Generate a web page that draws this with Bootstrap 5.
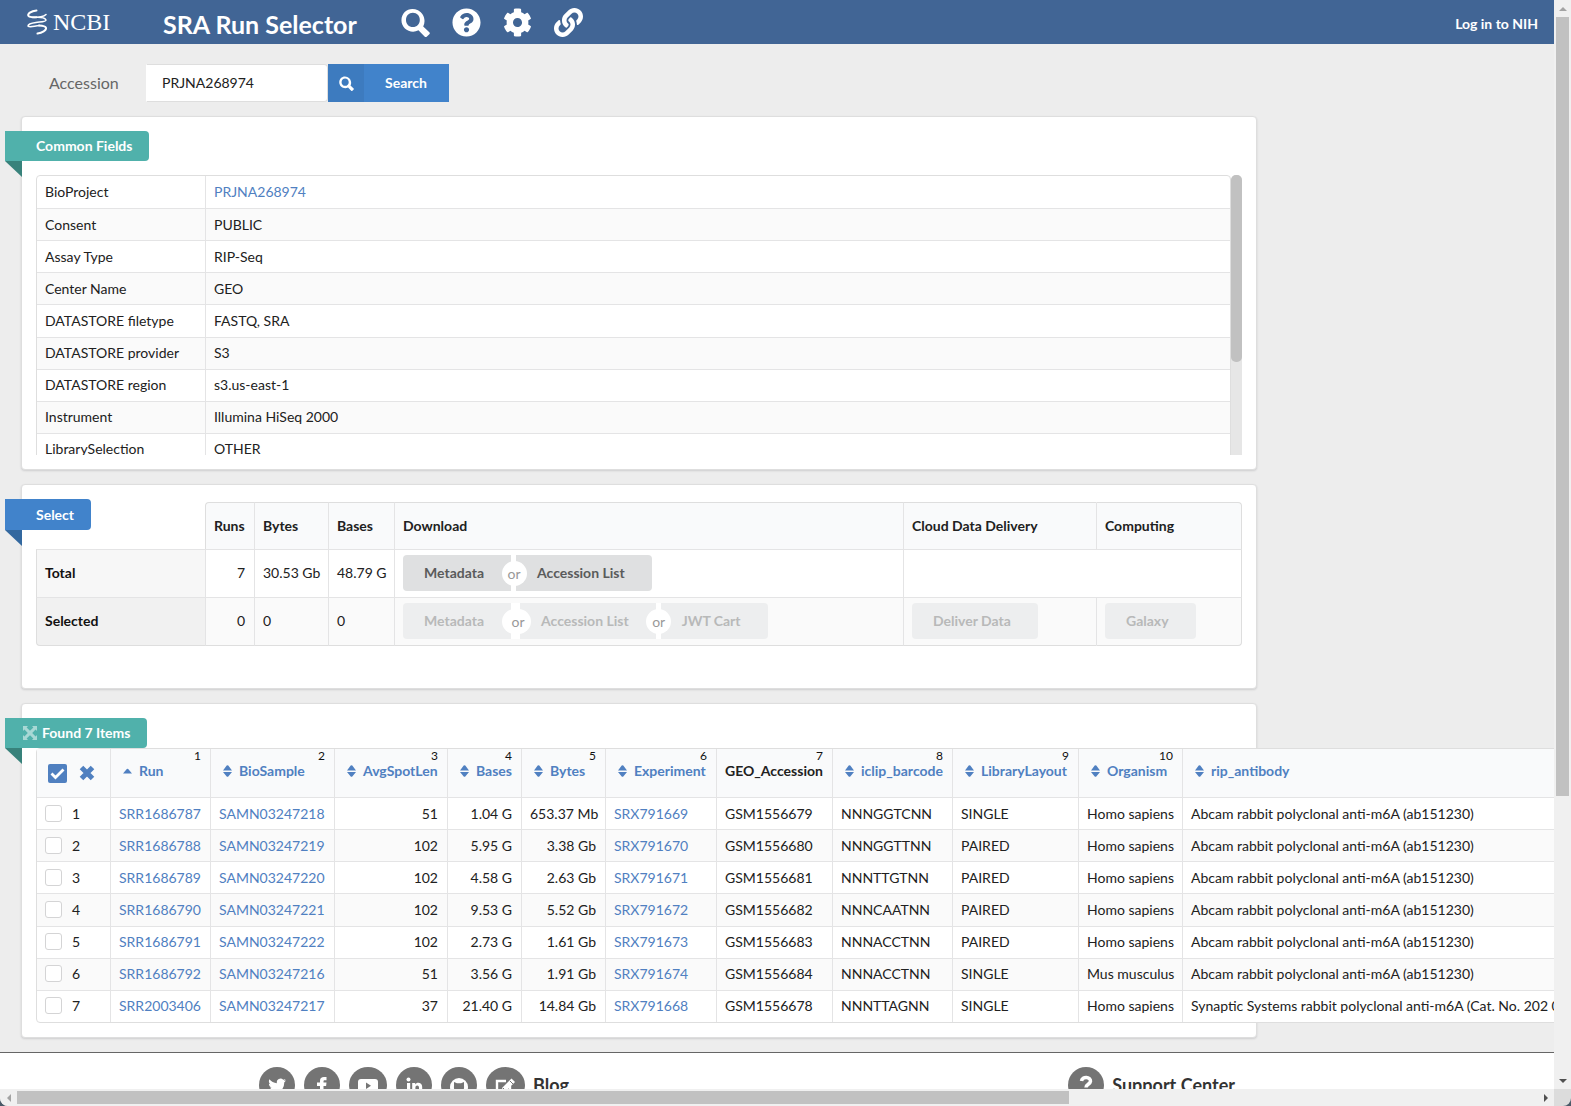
<!DOCTYPE html>
<html lang="en">
<head>
<meta charset="utf-8">
<meta name="viewport" content="width=device-width, initial-scale=1">
<title>SRA Run Selector</title>
<link rel="stylesheet" href="https://cdn.jsdelivr.net/npm/bootstrap@5.3.0/dist/css/bootstrap.min.css">
<style>
:root{--line:#dedede;--line-in:#e4e4e5;--link:#5080c1;--blue:#4183cb;--teal:#50b1ab}
body{font-family:Lato,"Liberation Sans",sans-serif;font-size:14px;line-height:20px;color:#212121;background:#4a5a68}
a{color:var(--link);text-decoration:none}
svg{display:block;flex:none}
.shell{display:grid;grid-template:minmax(0,1fr) 17px / minmax(0,1fr) 17px;height:100vh;overflow:hidden;border-radius:0 0 8px 8px;background:#dcdcdc}
.pane{overflow:hidden;background:#ededed}
.bar-v,.bar-h{background:#f0f0f0;display:flex;align-items:center}
.bar-v{flex-direction:column}
.arrow{flex:none;width:17px;height:17px;display:flex;align-items:center;justify-content:center}
.thumb-v{width:13px;height:71.5%;background:#c1c1c1}
.thumb-h{height:13px;width:67.7%;background:#c1c1c1}
.topbar{height:44px;background:#416595;color:#fff;padding:0 16px 0 27px}
.topbar a{color:#fff}
.brand{font-family:"Liberation Serif",serif;font-size:24px;line-height:28px;gap:6px;width:136px}
.app-title{font-size:25px;line-height:30px;font-weight:700;margin:4px 44px 0 0}
.tools{gap:22px}
.tools a{width:29px}
.searchrow{padding:20px 0 14px 49px}
.searchrow label{font-size:16px;color:#666;width:97px}
.acc-input{width:182px;height:38px;border:1px solid #dedede;border-left-color:#fff;border-radius:0 4px 4px 0;padding:0 15px 2px;color:#212121;font-size:14px}
.btn-go{height:38px;border:0;border-radius:0;background:var(--blue);color:#fff;font-weight:700;font-size:14px;padding:0 22px 0 0;display:flex;align-items:center;gap:21px}
.btn-go span{height:38px;width:36px;background:#3d7bbf;display:flex;align-items:center;justify-content:center}
.panel{margin:0 297px 14px 21px;background:#fff;border:1px solid var(--line);border-radius:4px;box-shadow:0 1px 2px rgba(34,36,38,.15);padding:14px;position:relative}
.ribbon{position:relative;display:flex;align-items:center;gap:5px;width:max-content;height:30px;margin-left:-31px;padding:0 17px 0 31px;border-radius:0 4px 4px 0;color:#fff;font-weight:700;font-size:14px;background:var(--teal)}
.ribbon::after{content:"";position:absolute;left:0;top:100%;border-style:solid;border-width:0 17px 16px 0;border-color:transparent #38827b transparent transparent}
.ribbon-blue{background:var(--blue);height:31px}
.ribbon-blue::after{border-right-color:#33689f}
.ribbon-found{padding-left:18px}
.grid{border-collapse:separate;border-spacing:0;table-layout:fixed;border:1px solid var(--line);border-radius:4px;background:#fff;margin:0}
.grid td,.grid th{padding:0 9px 0 8px;border-left:1px solid var(--line-in);border-top:1px solid var(--line-in);white-space:nowrap;height:31px;font-weight:400;text-align:left}
.grid td:first-child,.grid th:first-child{border-left:0}
.grid tr:first-child>*{border-top:0}
.grid tbody tr:nth-child(even){background:#fafafa}
.grid .num{text-align:right}
.fieldscroll{height:280px;overflow:hidden;margin-top:14px}
.fieldscroll .grid{height:291px}
.track{width:11px;background:#e6e6e6;flex:none;border-radius:5px 5px 0 0}
.track div{height:187px;background:#c1c1c1;border-radius:5px}
.sel{border:0;background:none;margin:3px 0 28px}
.sel th,.sel td{height:48px!important;border-left:1px solid var(--line-in)}
.sel thead th{height:47px!important;background:#f9fafb;font-weight:700;border-top:1px solid var(--line)!important}
.sel thead th:first-child{background:none;border-top-color:transparent!important}
.sel thead th:nth-child(2){border-top-left-radius:4px;border-left-color:var(--line)}
.sel thead th:last-child{border-top-right-radius:4px;border-right:1px solid var(--line)}
.sel tbody tr>*{border-top:1px solid var(--line-in)!important;padding-bottom:1px}
.sel tbody tr>*:last-child{border-right:1px solid var(--line)}
.sel tbody tr:last-child>*{border-bottom:1px solid var(--line);height:49px!important}
.sel tbody th{font-weight:700!important;background:#f7f7f7;border-left:1px solid var(--line)!important;color:#111}
.sel tbody tr:last-child th{background:#f1f1f1;border-bottom-left-radius:4px}
.sel tbody tr:last-child td:last-child{border-bottom-right-radius:4px}
.act{height:36px;border:0;background:#dfe0e1;color:#5a5b5b;font-weight:700;font-size:14px;line-height:20px;padding:0 27px 0 21px;border-radius:4px}
.act:disabled{background:#edeeef;color:#b8b9b9;opacity:1}
.act-l{border-radius:4px 0 0 4px}.act-m{border-radius:0}.act-r{border-radius:0 4px 4px 0}
.or{position:relative;width:5px;height:36px;color:#999;background:#fff}
.or span{position:absolute;z-index:1;left:50%;top:50%;width:25px;height:25px;line-height:26px;margin:-12px 0 0 -12px;border-radius:13px;background:#fff;text-align:center;font-weight:400}
.or-wide{width:9px}.or-wide span{width:29px;margin-left:-14px;padding-left:4px}
.runs{width:1656px;height:275px}
.runs thead th{background:#f9fafb;height:48px;padding:1px 9px 0 8px;font-weight:700;line-height:18px;vertical-align:top}
.runs thead small{display:block;font-size:12px;line-height:12px;height:12px;font-weight:400;text-align:right;color:#111}
.runs thead a{display:flex;align-items:center;gap:7px;padding-left:4px}
.runs thead th.pick{padding:0 11px;vertical-align:middle}
.runs tbody tr:first-child>*{border-top:1px solid var(--line-in)}
.icon-btn{border:0;background:none;padding:0;color:#5080c0}
.runs .form-check-input{width:17px;height:17px;margin:0 10px 0 0;border:1px solid #d4d4d5;border-radius:3px;vertical-align:-3px}
.foot{background:#fff;border-top:1px solid #666;margin-top:14px;padding:14px 319px 40px 259px;color:#333;font-size:18px;line-height:36px;font-weight:700}
.foot a{color:#333}
.social{gap:9px}
</style>
<script src="https://cdn.jsdelivr.net/npm/bootstrap@5.3.0/dist/js/bootstrap.bundle.min.js"></script>
</head>
<body>
<svg width="0" height="0" class="position-absolute" aria-hidden="true">
<symbol id="i-search" viewBox="0 0 512 512"><path fill="currentColor" d="M500 428 392 325C445 225 405 95 300 40 160-30 8 60 8 215c0 150 160 250 300 180l108 106c12 12 30 12 42 0l42-38c12-10 12-25 0-35zM210 335c-70.700 0-122-54-122-125 0-70.700 52-125 122-125 70.700 0 122 54 122 125 0 70.700-52 125-122 125z"/></symbol>
<symbol id="i-help" viewBox="0 0 512 512"><path fill="currentColor" d="M504 256c0 137-111 248-248 248S8 393 8 256C8 119.100 119 8 256 8s248 111.100 248 248zM262.700 90c-54.500 0-89.300 23-116.500 63.800-3.500 5.300-2.400 12.400 2.700 16.300l34.700 26.300c5.200 3.900 12.600 3 16.700-2.100 17.900-22.700 30.100-35.800 57.300-35.800 20.400 0 45.700 13.100 45.700 33 0 15-12.400 22.700-32.500 34C247.100 238.500 216 254.900 216 296v4c0 6.600 5.400 12 12 12h56c6.600 0 12-5.400 12-12v-1.300c0-28.500 83.200-29.600 83.200-106.700 0-58-60.200-102-116.500-102zM256 338c-25.400 0-46 20.600-46 46s20.600 46 46 46 46-20.600 46-46-20.600-46-46-46z"/></symbol>
<symbol id="i-cog" viewBox="0 0 512 512"><path fill="currentColor" d="M487.400 315.700l-42.600-24.600c4.300-23.200 4.300-47 0-70.200l42.600-24.600c4.900-2.800 7.100-8.600 5.500-14-11.100-35.600-30-67.800-54.700-94.600-3.800-4.100-10-5.100-14.800-2.300L380.800 110c-17.900-15.400-38.500-27.300-60.800-35.100V25.800c0-5.600-3.900-10.500-9.400-11.700-36.700-8.200-74.300-7.800-109.200 0-5.500 1.200-9.400 6.100-9.400 11.700V75c-22.200 7.900-42.800 19.800-60.800 35.100L88.700 85.500c-4.900-2.800-11-1.900-14.800 2.300-24.700 26.700-43.600 58.900-54.700 94.600-1.700 5.400.6 11.200 5.500 14L67.300 221c-4.300 23.200-4.300 47 0 70.200l-42.600 24.600c-4.900 2.800-7.100 8.600-5.500 14 11.100 35.600 30 67.800 54.700 94.600 3.800 4.100 10 5.100 14.800 2.300l42.600-24.600c17.900 15.400 38.500 27.300 60.800 35.100v49.200c0 5.600 3.900 10.500 9.400 11.700 36.700 8.200 74.300 7.800 109.200 0 5.500-1.200 9.400-6.100 9.400-11.700v-49.200c22.200-7.900 42.800-19.800 60.800-35.100l42.600 24.600c4.900 2.800 11 1.900 14.800-2.300 24.700-26.700 43.600-58.900 54.700-94.600 1.500-5.500-.7-11.300-5.600-14.100zM256 336c-44.100 0-80-35.900-80-80s35.900-80 80-80 80 35.900 80 80-35.900 80-80 80z"/></symbol>
<symbol id="i-link" viewBox="0 0 512 512"><path fill="currentColor" d="M326.600 185.400c59.700 59.800 58.900 155.700.4 214.600-.1.100-.2.300-.4.400l-67.200 67.200c-59.300 59.300-155.700 59.300-215 0-59.300-59.300-59.300-155.700 0-215l37.100-37.100c9.800-9.800 26.800-3.300 27.300 10.600.6 17.700 3.800 35.500 9.700 52.700 2 5.800.6 12.300-3.800 16.600l-13.100 13.100c-28 28-28.900 73.700-1.200 102 28 28.600 74.100 28.700 102.300.5l67.200-67.200c28.200-28.200 28.100-73.800 0-101.800-3.700-3.700-7.400-6.600-10.300-8.600a16 16 0 0 1-6.900-12.600c-.4-10.600 3.300-21.500 11.700-29.800l21.100-21.100c5.500-5.500 14.200-6.200 20.600-1.700a152.500 152.500 0 0 1 20.500 17.200zM467.500 44.400c-59.300-59.300-155.700-59.300-215 0l-67.200 67.200c-.1.100-.3.300-.4.400-58.600 58.900-59.400 154.800.4 214.600a152.500 152.500 0 0 0 20.500 17.200c6.400 4.500 15.100 3.800 20.600-1.700l21.100-21.100c8.400-8.400 12.100-19.200 11.700-29.800a16 16 0 0 0-6.900-12.600c-2.900-2-6.600-4.900-10.300-8.600-28.100-28.100-28.200-73.600 0-101.800l67.200-67.200c28.200-28.200 74.300-28.100 102.300.5 27.800 28.300 26.900 73.900-1.200 102l-13.100 13.100c-4.400 4.400-5.800 10.800-3.800 16.600 5.900 17.200 9 35 9.700 52.700.5 13.900 17.500 20.400 27.300 10.600l37.100-37.100c59.300-59.300 59.300-155.700 0-215z"/></symbol>
<symbol id="i-sort" viewBox="0 0 9 12"><path fill="currentColor" d="M0 5.500 3.700.6Q4.500-.2 5.300.6L9 5.500ZM0 7 3.700 11.400Q4.500 12.200 5.300 11.400L9 7Z"/></symbol>
<symbol id="i-up" viewBox="0 0 9 12"><path fill="currentColor" d="M0 8.500 3.800 4Q4.500 3.400 5.200 4L9 8.500Z"/></symbol>
</svg>

<div class="shell">
<div class="pane">
<header class="topbar d-flex align-items-center">
<a href="#" class="brand d-flex align-items-center">
<svg width="20" height="26" viewBox="0 0 20 26" fill="none" stroke="#fff" stroke-linecap="round"><path stroke-width="2" d="M9.500 1.500C4 2 0 5 1.500 7c1.200 1.600 5 1.200 8 1.200M12 16.500c4 .2 6.500.8 7 2.300.6 2.500-4 5-8.500 5.700"/><path stroke-width="1.500" d="M9 8.200c5-.2 9 .6 10 2.800 0 2-5 1.800-10 2.400-5 .6-8 2.200-8 3.600 1.500 2 6 0 11.500-.5M5 8.500c6 0 11 0 14-3"/></svg>
<span>NCBI</span></a>
<h1 class="app-title">SRA Run Selector</h1>
<nav class="tools d-flex">
<a href="#" aria-label="Search"><svg width="29" height="29"><use href="#i-search"/></svg></a>
<a href="#" aria-label="Help"><svg width="29" height="29"><use href="#i-help"/></svg></a>
<a href="#" aria-label="Settings"><svg width="29" height="29"><use href="#i-cog"/></svg></a>
<a href="#" aria-label="Permalink"><svg width="29" height="29"><use href="#i-link"/></svg></a>
</nav>
<a href="#" class="ms-auto fw-bold mt-1">Log in to NIH</a>
</header>

<form class="searchrow d-flex align-items-center">
<label for="acc">Accession</label>
<input id="acc" class="acc-input" type="text" value="PRJNA268974">
<button type="button" class="btn-go"><span><svg width="15" height="15"><use href="#i-search"/></svg></span>Search</button>
</form>

<section class="panel">
<div class="ribbon">Common Fields</div>
<div class="fieldscroll d-flex align-items-start">
<table class="grid flex-fill">
<colgroup><col style="width:168px"><col></colgroup>
<tbody>
<tr><td>BioProject</td><td><a href="#">PRJNA268974</a></td></tr>
<tr><td>Consent</td><td>PUBLIC</td></tr>
<tr><td>Assay Type</td><td>RIP-Seq</td></tr>
<tr><td>Center Name</td><td>GEO</td></tr>
<tr><td>DATASTORE filetype</td><td>FASTQ, SRA</td></tr>
<tr><td>DATASTORE provider</td><td>S3</td></tr>
<tr><td>DATASTORE region</td><td>s3.us-east-1</td></tr>
<tr><td>Instrument</td><td>Illumina HiSeq 2000</td></tr>
<tr><td>LibrarySelection</td><td>OTHER</td></tr>
</tbody></table>
<div class="track align-self-stretch"><div></div></div>
</div>
</section>

<section class="panel">
<div class="ribbon ribbon-blue position-absolute">Select</div>
<table class="grid sel w-100">
<colgroup><col style="width:169px"><col style="width:49px"><col style="width:74px"><col style="width:66px"><col><col style="width:193px"><col style="width:146px"></colgroup>
<thead><tr><th></th><th>Runs</th><th>Bytes</th><th>Bases</th><th>Download</th><th>Cloud Data Delivery</th><th>Computing</th></tr></thead>
<tbody>
<tr><th>Total</th><td class="num">7</td><td>30.53 Gb</td><td>48.79 G</td>
<td><div class="d-flex"><button class="act act-l">Metadata</button><div class="or"><span>or</span></div><button class="act act-r">Accession List</button></div></td><td colspan="2"></td></tr>
<tr><th>Selected</th><td class="num">0</td><td>0</td><td>0</td>
<td><div class="d-flex"><button class="act act-l" disabled>Metadata</button><div class="or or-wide"><span>or</span></div><button class="act act-m" disabled>Accession List</button><div class="or"><span>or</span></div><button class="act act-r" disabled>JWT Cart</button></div></td>
<td><button class="act" disabled>Deliver Data</button></td><td><button class="act" disabled>Galaxy</button></td></tr>
</tbody></table>
</section>

<section class="panel">
<div class="ribbon ribbon-found"><svg width="14" height="14" viewBox="0 0 14 14" fill="#fff" opacity=".5"><path d="M0 0h5L3.600 1.400 7 4.800 10.400 1.400 9 0h5v5l-1.400-1.400L9.200 7l3.400 3.400L14 9v5H9l1.400-1.400L7 9.200l-3.400 3.400L5 14H0V9l1.400 1.400L4.800 7 1.400 3.600 0 5Z"/></svg>Found 7 Items</div>
<table class="grid runs">
<colgroup><col style="width:73px"><col style="width:100px"><col style="width:124px"><col style="width:113px"><col style="width:74px"><col style="width:84px"><col style="width:111px"><col style="width:116px"><col style="width:120px"><col style="width:126px"><col style="width:104px"><col></colgroup>
<thead><tr>
<th class="pick"><div class="d-flex align-items-center gap-2">
<button class="icon-btn" aria-label="Select all"><svg width="19" height="19" viewBox="0 0 19 19"><rect width="19" height="19" rx="2" fill="currentColor"/><path d="M3.500 9.500l4 4 8-8" fill="none" stroke="#fff" stroke-width="2.800"/></svg></button>
<button class="icon-btn ps-1" aria-label="Clear selection"><svg width="16" height="16" viewBox="0 0 16 16"><path d="M2.500 2.500l11 11M13.500 2.500l-11 11" stroke="currentColor" stroke-width="5"/></svg></button></div></th>
<th><small>1</small><a href="#"><svg width="9" height="12"><use href="#i-up"/></svg>Run</a></th>
<th><small>2</small><a href="#"><svg width="9" height="12"><use href="#i-sort"/></svg>BioSample</a></th>
<th><small>3</small><a href="#"><svg width="9" height="12"><use href="#i-sort"/></svg>AvgSpotLen</a></th>
<th><small>4</small><a href="#"><svg width="9" height="12"><use href="#i-sort"/></svg>Bases</a></th>
<th><small>5</small><a href="#"><svg width="9" height="12"><use href="#i-sort"/></svg>Bytes</a></th>
<th><small>6</small><a href="#"><svg width="9" height="12"><use href="#i-sort"/></svg>Experiment</a></th>
<th><small>7</small>GEO_Accession</th>
<th><small>8</small><a href="#"><svg width="9" height="12"><use href="#i-sort"/></svg>iclip_barcode</a></th>
<th><small>9</small><a href="#"><svg width="9" height="12"><use href="#i-sort"/></svg>LibraryLayout</a></th>
<th><small>10</small><a href="#"><svg width="9" height="12"><use href="#i-sort"/></svg>Organism</a></th>
<th><small></small><a href="#"><svg width="9" height="12"><use href="#i-sort"/></svg>rip_antibody</a></th>
</tr></thead>
<tbody>
<tr><td><label><input type="checkbox" class="form-check-input">1</label></td><td><a href="#">SRR1686787</a></td><td><a href="#">SAMN03247218</a></td><td class="num">51</td><td class="num">1.04 G</td><td class="num">653.37 Mb</td><td><a href="#">SRX791669</a></td><td>GSM1556679</td><td>NNNGGTCNN</td><td>SINGLE</td><td>Homo sapiens</td><td>Abcam rabbit polyclonal anti-m6A (ab151230)</td></tr>
<tr><td><label><input type="checkbox" class="form-check-input">2</label></td><td><a href="#">SRR1686788</a></td><td><a href="#">SAMN03247219</a></td><td class="num">102</td><td class="num">5.95 G</td><td class="num">3.38 Gb</td><td><a href="#">SRX791670</a></td><td>GSM1556680</td><td>NNNGGTTNN</td><td>PAIRED</td><td>Homo sapiens</td><td>Abcam rabbit polyclonal anti-m6A (ab151230)</td></tr>
<tr><td><label><input type="checkbox" class="form-check-input">3</label></td><td><a href="#">SRR1686789</a></td><td><a href="#">SAMN03247220</a></td><td class="num">102</td><td class="num">4.58 G</td><td class="num">2.63 Gb</td><td><a href="#">SRX791671</a></td><td>GSM1556681</td><td>NNNTTGTNN</td><td>PAIRED</td><td>Homo sapiens</td><td>Abcam rabbit polyclonal anti-m6A (ab151230)</td></tr>
<tr><td><label><input type="checkbox" class="form-check-input">4</label></td><td><a href="#">SRR1686790</a></td><td><a href="#">SAMN03247221</a></td><td class="num">102</td><td class="num">9.53 G</td><td class="num">5.52 Gb</td><td><a href="#">SRX791672</a></td><td>GSM1556682</td><td>NNNCAATNN</td><td>PAIRED</td><td>Homo sapiens</td><td>Abcam rabbit polyclonal anti-m6A (ab151230)</td></tr>
<tr><td><label><input type="checkbox" class="form-check-input">5</label></td><td><a href="#">SRR1686791</a></td><td><a href="#">SAMN03247222</a></td><td class="num">102</td><td class="num">2.73 G</td><td class="num">1.61 Gb</td><td><a href="#">SRX791673</a></td><td>GSM1556683</td><td>NNNACCTNN</td><td>PAIRED</td><td>Homo sapiens</td><td>Abcam rabbit polyclonal anti-m6A (ab151230)</td></tr>
<tr><td><label><input type="checkbox" class="form-check-input">6</label></td><td><a href="#">SRR1686792</a></td><td><a href="#">SAMN03247216</a></td><td class="num">51</td><td class="num">3.56 G</td><td class="num">1.91 Gb</td><td><a href="#">SRX791674</a></td><td>GSM1556684</td><td>NNNACCTNN</td><td>SINGLE</td><td>Mus musculus</td><td>Abcam rabbit polyclonal anti-m6A (ab151230)</td></tr>
<tr><td><label><input type="checkbox" class="form-check-input">7</label></td><td><a href="#">SRR2003406</a></td><td><a href="#">SAMN03247217</a></td><td class="num">37</td><td class="num">21.40 G</td><td class="num">14.84 Gb</td><td><a href="#">SRX791668</a></td><td>GSM1556678</td><td>NNNTTAGNN</td><td>SINGLE</td><td>Homo sapiens</td><td>Synaptic Systems rabbit polyclonal anti-m6A (Cat. No. 202 003)</td></tr>
</tbody></table>
</section>

<footer class="foot d-flex justify-content-between">
<div class="social d-flex">
<a href="#" aria-label="Twitter"><svg width="36" height="36" viewBox="0 0 36 36"><circle cx="18" cy="18" r="18" fill="#747474"/><path fill="#fff" d="M27 13.300c-.7.300-1.400.5-2.100.6.800-.5 1.300-1.200 1.600-2-.7.400-1.500.7-2.300.9a3.700 3.700 0 0 0-6.300 3.400c-3-.2-5.700-1.600-7.500-3.900-1 1.700-.5 3.800 1.100 4.900-.6 0-1.100-.2-1.600-.5 0 1.800 1.200 3.300 2.900 3.700-.5.100-1.100.2-1.700.1.500 1.500 1.800 2.500 3.500 2.600A7.500 7.500 0 0 1 9 24.700a10.500 10.500 0 0 0 16.200-9.300c.7-.6 1.300-1.300 1.800-2.100Z"/></svg></a>
<a href="#" aria-label="Facebook"><svg width="36" height="36" viewBox="0 0 36 36"><circle cx="18" cy="18" r="18" fill="#747474"/><path fill="#fff" d="M16 27v-8h-3v-3.500h3V14c0-3 1.500-4 4-4h2.500v3.200h-1.700c-1 0-1.300.4-1.300 1.300v1h3l-.4 3.500h-2.600v8Z"/></svg></a>
<a href="#" aria-label="YouTube"><svg width="38" height="36" viewBox="0 0 38 36"><ellipse cx="19" cy="18" rx="19" ry="18" fill="#747474"/><rect x="9" y="12" width="20" height="14" rx="3" fill="#fff"/><path fill="#747474" d="M17 15.500v6.500l5-3.200Z"/></svg></a>
<a href="#" aria-label="LinkedIn"><svg width="36" height="36" viewBox="0 0 36 36"><circle cx="18" cy="18" r="18" fill="#747474"/><circle cx="12.500" cy="12.500" r="2" fill="#fff"/><path fill="#fff" d="M11 16h3.200v10H11ZM16.200 16h3v1.400c1.500-2.500 7-2.200 7 2.600v6H23v-5.300c0-3-3.600-2.700-3.600 0V26h-3.200Z"/></svg></a>
<a href="#" aria-label="GitHub"><svg width="36" height="36" viewBox="0 0 36 36"><circle cx="18" cy="18" r="18" fill="#747474"/><circle cx="18" cy="20" r="9" fill="#fff"/><path fill="#747474" d="M13 15v4c-.5 4 1.500 5 3.500 5.300V27h3v-2.700c2-.3 4-1.300 3.500-5.300v-4l-3 1.200h-4Z"/></svg></a>
<a href="#" class="d-flex gap-2"><svg width="39" height="36" viewBox="0 0 39 36"><ellipse cx="19.500" cy="18" rx="19.500" ry="18" fill="#747474"/><path d="M20 14h-9v11h13v-6" fill="none" stroke="#fff" stroke-width="2.400"/><path fill="#fff" d="M25.500 11.500 29 15l-9 9-4.500 1 1-4.500Z"/><path d="M24 14l3 3M17 21l2.500 2.500" stroke="#747474"/></svg>Blog</a>
</div>
<a href="#" class="d-flex gap-2"><svg width="36" height="36" viewBox="0 0 36 36"><circle cx="18" cy="18" r="18" fill="#747474"/><path d="M13.500 14c.5-5 9.500-4.500 9 .3-.3 3-4.500 3-4.500 6.200" fill="none" stroke="#fff" stroke-width="3.500"/><circle cx="18" cy="25.500" r="2.200" fill="#fff"/></svg><span>Support Center</span></a>
</footer>
</div>

<div class="bar-v"><div class="arrow"><svg width="8" height="4"><path d="M4 0l4 4H0Z" fill="#a3a3a3"/></svg></div><div class="thumb-v"></div><div class="arrow mt-auto"><svg width="8" height="4"><path d="M0 0h8L4 4Z" fill="#505050"/></svg></div></div>
<div class="bar-h"><div class="arrow"><svg width="4" height="8"><path d="M0 4l4-4v8Z" fill="#a3a3a3"/></svg></div><div class="thumb-h"></div><div class="arrow ms-auto"><svg width="4" height="8"><path d="M0 0v8l4-4Z" fill="#505050"/></svg></div></div>
</div>
</body>
</html>
